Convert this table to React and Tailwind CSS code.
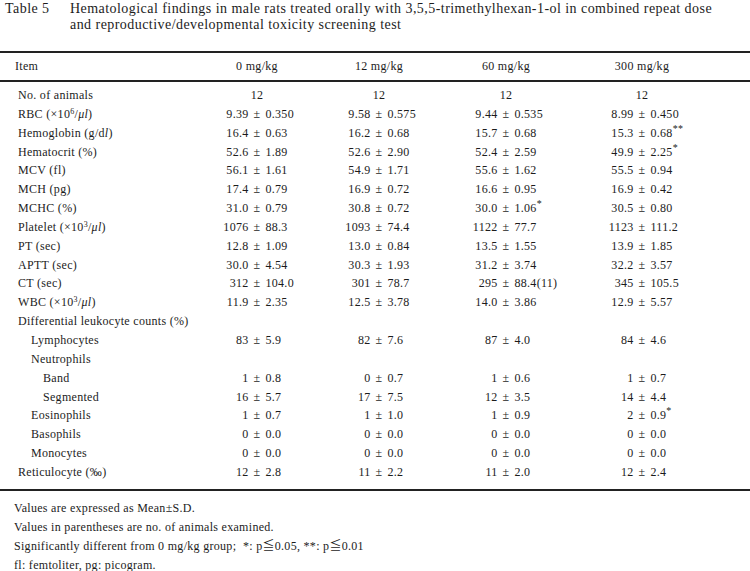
import React from 'react';

const cols = 'grid grid-cols-[195px_124px_120px_134px_138px]';

const rows = [
  { label: 'No. of animals', vals: ['12', '12', '12', '12'] },
  { label: <>RBC (×10<sup className="text-[8px]">6</sup>/<i>μl</i>)</>, vals: [['9.39', '0.350'], ['9.58', '0.575'], ['9.44', '0.535'], ['8.99', '0.450']] },
  { label: <>Hemoglobin (g/d<i>l</i>)</>, vals: [['16.4', '0.63'], ['16.2', '0.68'], ['15.7', '0.68'], ['15.3', '0.68', '**']] },
  { label: 'Hematocrit (%)', vals: [['52.6', '1.89'], ['52.6', '2.90'], ['52.4', '2.59'], ['49.9', '2.25', '*']] },
  { label: 'MCV (fl)', vals: [['56.1', '1.61'], ['54.9', '1.71'], ['55.6', '1.62'], ['55.5', '0.94']] },
  { label: 'MCH (pg)', vals: [['17.4', '0.79'], ['16.9', '0.72'], ['16.6', '0.95'], ['16.9', '0.42']] },
  { label: 'MCHC (%)', vals: [['31.0', '0.79'], ['30.8', '0.72'], ['30.0', '1.06', '*'], ['30.5', '0.80']] },
  { label: <>Platelet (×10<sup className="text-[8px]">3</sup>/<i>μl</i>)</>, vals: [['1076', '88.3'], ['1093', '74.4'], ['1122', '77.7'], ['1123', '111.2']] },
  { label: 'PT (sec)', vals: [['12.8', '1.09'], ['13.0', '0.84'], ['13.5', '1.55'], ['13.9', '1.85']] },
  { label: 'APTT (sec)', vals: [['30.0', '4.54'], ['30.3', '1.93'], ['31.2', '3.74'], ['32.2', '3.57']] },
  { label: 'CT (sec)', vals: [['312', '104.0'], ['301', '78.7'], ['295', '88.4(11)'], ['345', '105.5']] },
  { label: <>WBC (×10<sup className="text-[8px]">3</sup>/<i>μl</i>)</>, vals: [['11.9', '2.35'], ['12.5', '3.78'], ['14.0', '3.86'], ['12.9', '5.57']] },
  { label: 'Differential leukocyte counts (%)', vals: [] },
  { label: 'Lymphocytes', indent: 1, vals: [['83', '5.9'], ['82', '7.6'], ['87', '4.0'], ['84', '4.6']] },
  { label: 'Neutrophils', indent: 1, vals: [] },
  { label: 'Band', indent: 2, vals: [['1', '0.8'], ['0', '0.7'], ['1', '0.6'], ['1', '0.7']] },
  { label: 'Segmented', indent: 2, vals: [['16', '5.7'], ['17', '7.5'], ['12', '3.5'], ['14', '4.4']] },
  { label: 'Eosinophils', indent: 1, vals: [['1', '0.7'], ['1', '1.0'], ['1', '0.9'], ['2', '0.9', '*']] },
  { label: 'Basophils', indent: 1, vals: [['0', '0.0'], ['0', '0.0'], ['0', '0.0'], ['0', '0.0']] },
  { label: 'Monocytes', indent: 1, vals: [['0', '0.0'], ['0', '0.0'], ['0', '0.0'], ['0', '0.0']] },
  { label: 'Reticulocyte (‰)', vals: [['12', '2.8'], ['11', '2.2'], ['11', '2.0'], ['12', '2.4']] },
];

function Value({ v }) {
  if (typeof v === 'string') return <div className="text-center">{v}</div>;
  const [mean, sd, mark] = v;
  return (
    <div className="grid grid-cols-[1fr_auto_1fr]">
      <span className="text-right">{mean}</span>
      <span className="px-[5px]">±</span>
      <span className="text-left whitespace-nowrap">
        {sd}
        {mark && <span className="text-[10px] align-top leading-none">{mark}</span>}
      </span>
    </div>
  );
}

export default function App() {
  return (
    <div className="w-[750px] h-[571px] bg-white text-[#1c1c1c] font-[family-name:'Liberation_Serif','Noto_Sans_CJK_JP',serif] text-[12px] tracking-[0.3px] overflow-hidden">
      {/* caption */}
      <div className="flex pt-[1px] text-[14px] tracking-[0.45px] leading-[16px]">
        <div className="w-[70px] pl-[5px] shrink-0">Table 5</div>
        <div>
          Hematological findings in male rats treated orally with 3,5,5-trimethylhexan-1-ol in combined repeat dose
          <br />
          and reproductive/developmental toxicity screening test
        </div>
      </div>

      <div className="mt-[18px] h-[2px] bg-[#222]" />
      <div className={`${cols} h-[27px] items-center pb-[2px]`}>
        <div className="pl-[15px]">Item</div>
        <div className="text-center">0 mg/kg</div>
        <div className="text-center">12 mg/kg</div>
        <div className="text-center">60 mg/kg</div>
        <div className="text-center">300 mg/kg</div>
      </div>
      <div className="h-[2px] bg-[#222]" />

      <div className="pt-[4px] pb-[7px]">
        {rows.map((r, i) => (
          <div key={i} className={`${cols} leading-[18.85px]`}>
            <div
              className={`whitespace-nowrap ${
                r.indent === 2 ? 'pl-[43px]' : r.indent === 1 ? 'pl-[31px]' : 'pl-[18px]'
              }`}
            >
              {r.label}
            </div>
            {r.vals.map((v, j) => (
              <Value key={j} v={v} />
            ))}
          </div>
        ))}
      </div>
      <div className="h-[2px] bg-[#222]" />

      <div className="pt-[8px] pl-[14px] leading-[19px]">
        <div>Values are expressed as Mean±S.D.</div>
        <div>Values in parentheses are no. of animals examined.</div>
        <div>Significantly different from 0 mg/kg group;&nbsp; *: p≦0.05, **: p≦0.01</div>
        <div>fl: femtoliter, pg: picogram.</div>
      </div>
    </div>
  );
}
